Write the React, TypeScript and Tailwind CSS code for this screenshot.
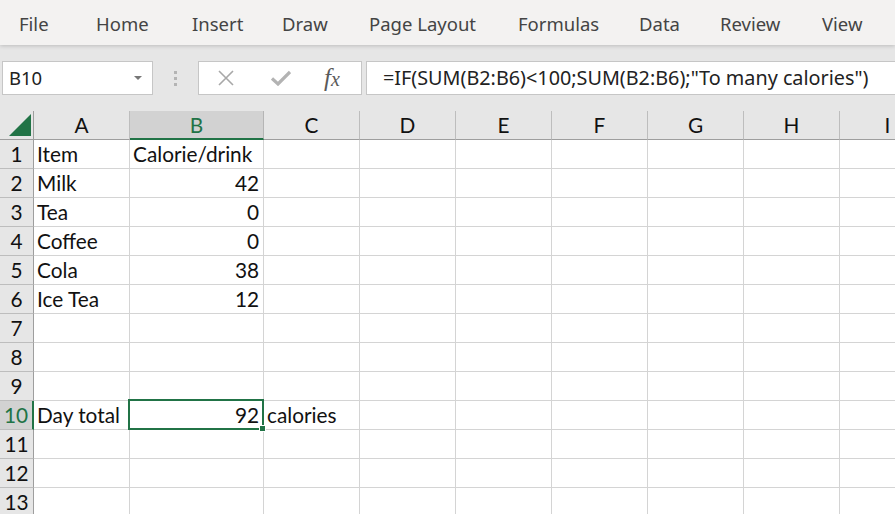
import React from "react";

const menu: [string, number][] = [
  ["File", 77],
  ["Home", 96],
  ["Insert", 90],
  ["Draw", 87],
  ["Page Layout", 149],
  ["Formulas", 121],
  ["Data", 81],
  ["Review", 102],
  ["View", 60],
];

const cols = ["A", "B", "C", "D", "E", "F", "G", "H", "I"];

const data: Record<number, { a?: string; b?: string; c?: string }> = {
  1: { a: "Item", b: "Calorie/drink" },
  2: { a: "Milk", b: "42" },
  3: { a: "Tea", b: "0" },
  4: { a: "Coffee", b: "0" },
  5: { a: "Cola", b: "38" },
  6: { a: "Ice Tea", b: "12" },
  10: { a: "Day total", b: "92", c: "calories" },
};

const cellFont = { fontFamily: "Lato, 'Liberation Sans', sans-serif" };
const uiFont = { fontFamily: "'Noto Sans', 'Open Sans', sans-serif" };

export default function App() {
  const rows = Array.from({ length: 13 }, (_, i) => i + 1);
  return (
    <div className="w-[895px] h-[514px] overflow-hidden bg-white relative">
      {/* Menu */}
      <div
        className="h-[45px] bg-[#f3f2f1] flex items-center pl-[19px] relative z-10 shadow-[0_1px_4px_rgba(0,0,0,0.18)] text-[#444444] text-[18.5px]"
        style={uiFont}
      >
        {menu.map(([t, w]) => (
          <div key={t} className="shrink-0 whitespace-nowrap pt-[3px]" style={{ width: w }}>
            {t}
          </div>
        ))}
      </div>

      {/* Formula bar */}
      <div className="h-[66px] bg-[#e6e6e6] flex items-start pt-[16px]">
        <div
          className="ml-[2px] w-[151px] h-[34px] bg-white border border-[#c6c6c6] flex items-center pl-[6px] pr-[10px] text-[18.5px] text-[#222]"
          style={uiFont}
        >
          <span className="flex-1">B10</span>
          <svg width="8" height="5" viewBox="0 0 8 5">
            <path d="M0 0 L8 0 L4 4 Z" fill="#777" />
          </svg>
        </div>
        <div className="w-[45px] h-[34px] flex flex-col items-center justify-center gap-[3px]">
          <div className="w-[3px] h-[3px] bg-[#b4b4b4]" />
          <div className="w-[3px] h-[3px] bg-[#b4b4b4]" />
          <div className="w-[3px] h-[3px] bg-[#b4b4b4]" />
        </div>
        <div className="w-[164px] h-[34px] bg-white border border-[#c6c6c6] flex items-center">
          <div className="w-[18px] ml-[18px]">
            <svg width="18" height="18" viewBox="0 0 18 18">
              <path d="M2 2 L16 16 M16 2 L2 16" stroke="#a8a8a8" strokeWidth="1.6" />
            </svg>
          </div>
          <div className="ml-[36px]">
            <svg width="20" height="16" viewBox="0 0 20 16">
              <path d="M1 8.5 L7 14 L19 2" stroke="#b3b3b3" strokeWidth="3.2" fill="none" />
            </svg>
          </div>
          <div
            className="ml-[33px] text-[25px] italic text-[#5a5a5a] leading-none pb-[2px]"
            style={{ fontFamily: "'Liberation Serif', serif" }}
          >
            f<span className="text-[20px]">x</span>
          </div>
        </div>
        <div
          className="ml-[4px] flex-1 h-[34px] bg-white border-y border-l border-[#c6c6c6] flex items-center pl-[16px] text-[19.8px] text-[#222] whitespace-nowrap"
          style={uiFont}
        >
          =IF(SUM(B2:B6)&lt;100;SUM(B2:B6);"To many calories")
        </div>
      </div>

      {/* Grid */}
      <div
        className="grid grid-cols-[34px_96px_134px_96px_96px_96px_96px_96px_96px_96px] text-[20.8px] text-[#111]"
        style={cellFont}
      >
        {/* header row */}
        <div className="h-[29px] bg-[#e6e6e6] border-r border-b border-[#9e9e9e] relative">
          <svg className="absolute left-0 top-0" width="34" height="28" viewBox="0 0 34 28">
            <polygon points="31,3 31,25 9,25" fill="#217346" />
          </svg>
        </div>
        {cols.map((c) =>
          c === "B" ? (
            <div
              key={c}
              className="h-[29px] bg-[#d2d2d2] border-r border-[#b5b5b5] border-b-2 border-b-[#217346] flex items-center justify-center text-[#217346]"
            >
              {c}
            </div>
          ) : (
            <div
              key={c}
              className="h-[29px] bg-[#e6e6e6] border-r border-[#bdbdbd] border-b border-b-[#9e9e9e] flex items-center justify-center"
            >
              {c}
            </div>
          )
        )}
        {rows.map((r) => {
          const d = data[r] || {};
          const sel = r === 10;
          return (
            <React.Fragment key={r}>
              <div
                className={
                  sel
                    ? "h-[29px] bg-[#d2d2d2] border-r-2 border-r-[#217346] border-b border-b-[#bdbdbd] flex items-center justify-center text-[#217346]"
                    : "h-[29px] bg-[#e6e6e6] border-r border-r-[#9e9e9e] border-b border-b-[#bdbdbd] flex items-center justify-center"
                }
              >
                {r}
              </div>
              {cols.map((c) => {
                let content: React.ReactNode = null;
                let cls = "h-[29px] border-r border-b border-[#d4d4d4] flex items-center whitespace-nowrap";
                if (c === "A" && d.a) {
                  content = d.a;
                  cls += " pl-[3px]";
                }
                if (c === "B" && d.b) {
                  content = d.b;
                  cls += r === 1 ? " pl-[3px]" : " justify-end pr-[4px]";
                }
                if (c === "C" && d.c) {
                  content = d.c;
                  cls += " pl-[3px]";
                }
                const isSel = sel && c === "B";
                return (
                  <div key={c} className={cls + (isSel ? " relative" : "")}>
                    {content}
                    {isSel && (
                      <>
                        <span className="absolute left-[-2px] top-[-2px] right-[-1px] bottom-[-1px] border-2 border-[#217346]" />
                        <span className="absolute right-[-3px] bottom-[-3px] w-[7px] h-[7px] bg-[#217346] border border-white" />
                      </>
                    )}
                  </div>
                );
              })}
            </React.Fragment>
          );
        })}
      </div>
    </div>
  );
}
